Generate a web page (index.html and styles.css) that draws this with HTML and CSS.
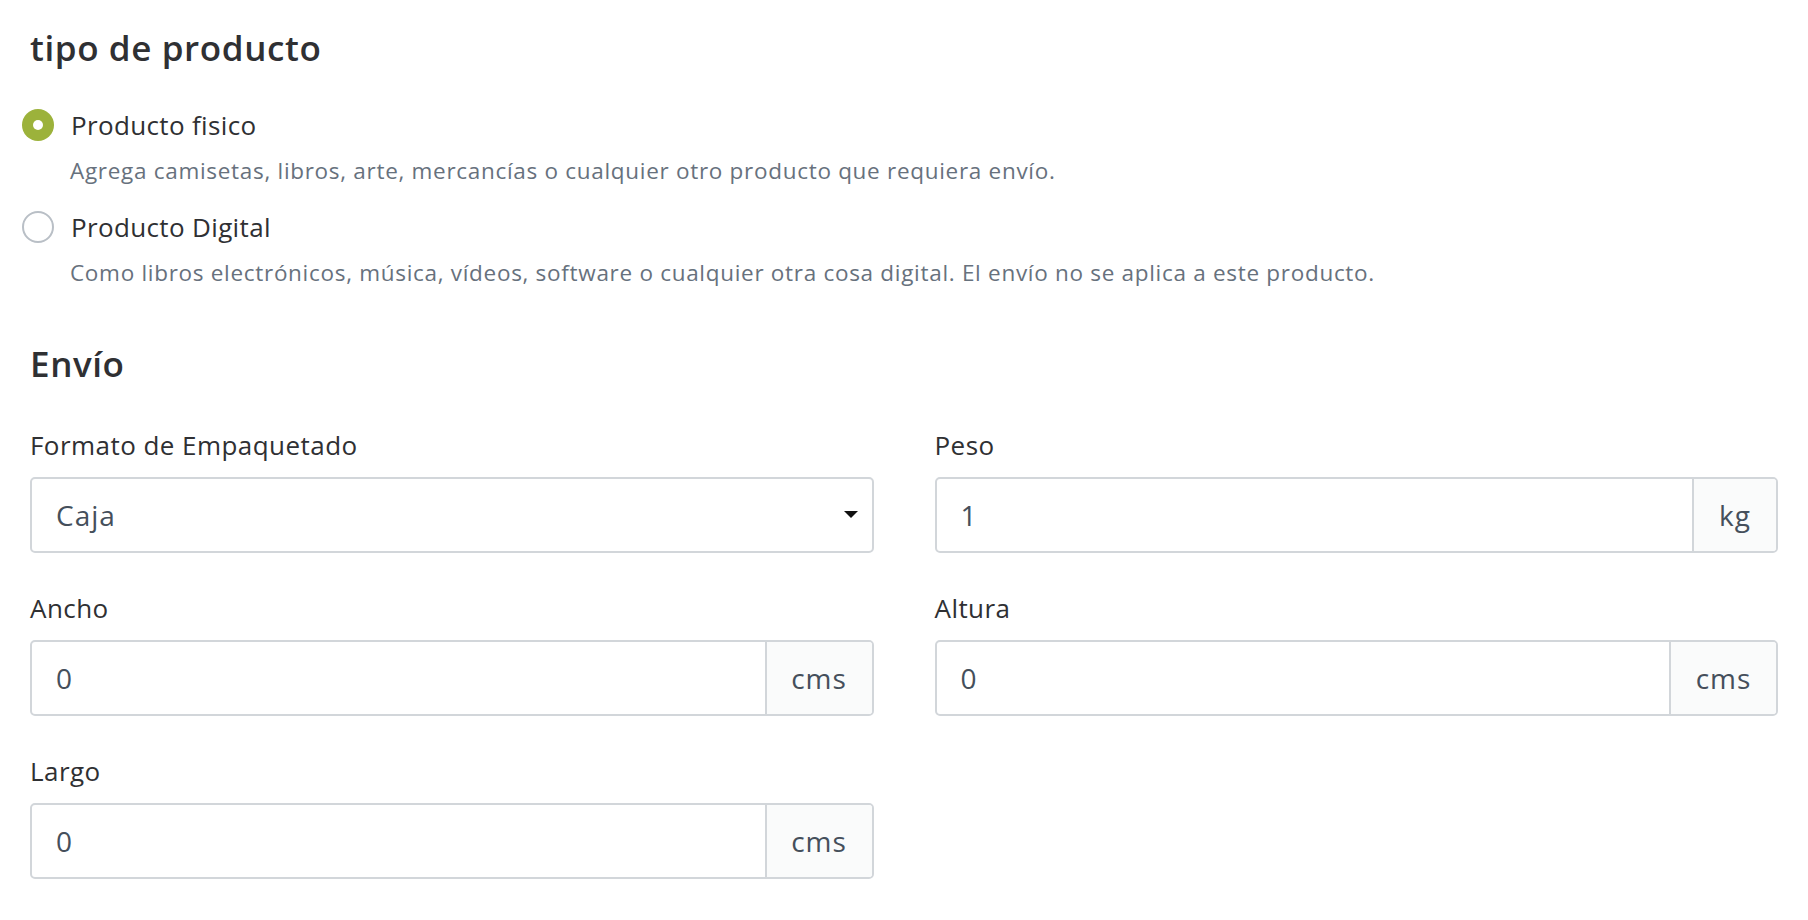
FILE: index.html
```html
<!DOCTYPE html>
<html lang="es">
<head>
    <meta charset="UTF-8">
    <meta name="viewport" content="width=device-width, initial-scale=1.0">
    <title>Tipo de producto</title>
    <link rel="stylesheet" href="styles.css">
</head>
<body>
    <div class="page">
        <h2 class="section-title">tipo de producto</h2>

        <div class="product-types">
            <label class="radio-option">
                <span class="radio checked"></span>
                <span class="radio-label">Producto fisico</span>
            </label>
            <p class="radio-help">Agrega camisetas, libros, arte, mercancías o cualquier otro producto que requiera envío.</p>

            <label class="radio-option">
                <span class="radio"></span>
                <span class="radio-label">Producto Digital</span>
            </label>
            <p class="radio-help">Como libros electrónicos, música, vídeos, software o cualquier otra cosa digital. El envío no se aplica a este producto.</p>
        </div>

        <h2 class="section-title shipping-title">Envío</h2>

        <div class="shipping-grid">
            <div class="field">
                <label class="field-label">Formato de Empaquetado</label>
                <div class="input-box select-box">
                    <span class="input-value">Caja</span>
                    <svg class="caret" width="14" height="8" viewBox="0 0 14 8"><path d="M0 0 L14 0 L7 7 Z" fill="#111"/></svg>
                </div>
            </div>

            <div class="field">
                <label class="field-label">Peso</label>
                <div class="input-box">
                    <span class="input-value">1</span>
                    <span class="addon addon-kg">kg</span>
                </div>
            </div>

            <div class="field">
                <label class="field-label">Ancho</label>
                <div class="input-box">
                    <span class="input-value">0</span>
                    <span class="addon">cms</span>
                </div>
            </div>

            <div class="field">
                <label class="field-label">Altura</label>
                <div class="input-box">
                    <span class="input-value">0</span>
                    <span class="addon">cms</span>
                </div>
            </div>

            <div class="field">
                <label class="field-label">Largo</label>
                <div class="input-box">
                    <span class="input-value">0</span>
                    <span class="addon">cms</span>
                </div>
            </div>
        </div>
    </div>
</body>
</html>
```

FILE: styles.css
```css
* {
    margin: 0;
    padding: 0;
    box-sizing: border-box;
}

body {
    font-family: 'Open Sans', 'Lato', sans-serif;
    background: #fff;
    color: #333;
}

.page {
    padding: 0 30px;
}

.section-title {
    font-size: 35px;
    line-height: 44px;
    font-weight: 600;
    letter-spacing: 0.6px;
    color: #2f3033;
    margin-top: 26px;
}

.shipping-title {
    margin-top: 54px;
}

.product-types {
    margin-top: 37px;
}

.radio-option {
    display: flex;
    align-items: center;
    margin-left: -8px;
    cursor: pointer;
}

.radio {
    width: 32px;
    height: 32px;
    border-radius: 50%;
    border: 2px solid #b9bfc6;
    background: #fff;
    position: relative;
    flex-shrink: 0;
}

.radio.checked {
    border: none;
    background: #9cb23b;
}

.radio.checked:after {
    content: "";
    position: absolute;
    left: 11px;
    top: 11px;
    width: 10px;
    height: 10px;
    border-radius: 50%;
    background: #fff;
}

.radio-label {
    font-size: 26px;
    line-height: 36px;
    letter-spacing: 0.35px;
    margin-left: 17px;
    color: #2f3033;
}

.radio-help {
    font-size: 22.5px;
    line-height: 30px;
    letter-spacing: 0.7px;
    color: #67717d;
    padding-left: 40px;
    margin-top: 13px;
    margin-bottom: 23px;
}

.radio-help:last-child {
    margin-bottom: 0;
}

.shipping-grid {
    display: grid;
    grid-template-columns: 1fr 1fr;
    column-gap: 61px;
    row-gap: 38px;
    margin-top: 42px;
}

.field-label {
    display: block;
    font-size: 26px;
    line-height: 34px;
    letter-spacing: 0.45px;
    color: #2f3033;
    margin-bottom: 15px;
}

.input-box {
    display: flex;
    align-items: stretch;
    height: 76px;
    border: 2px solid #d2d6da;
    border-radius: 5px;
    background: #fff;
    overflow: hidden;
}

.input-value {
    flex: 1;
    display: flex;
    align-items: center;
    padding-left: 24px;
    font-size: 28px;
    letter-spacing: 1px;
    color: #454f5b;
}

.select-box {
    align-items: center;
    padding-right: 14px;
}

.select-box .input-value {
    align-self: stretch;
}

.addon {
    width: 107px;
    display: flex;
    align-items: center;
    justify-content: center;
    border-left: 2px solid #d2d6da;
    background: #fafbfb;
    font-size: 28px;
    letter-spacing: 1px;
    color: #454f5b;
}

.addon-kg {
    width: 84px;
}
```
